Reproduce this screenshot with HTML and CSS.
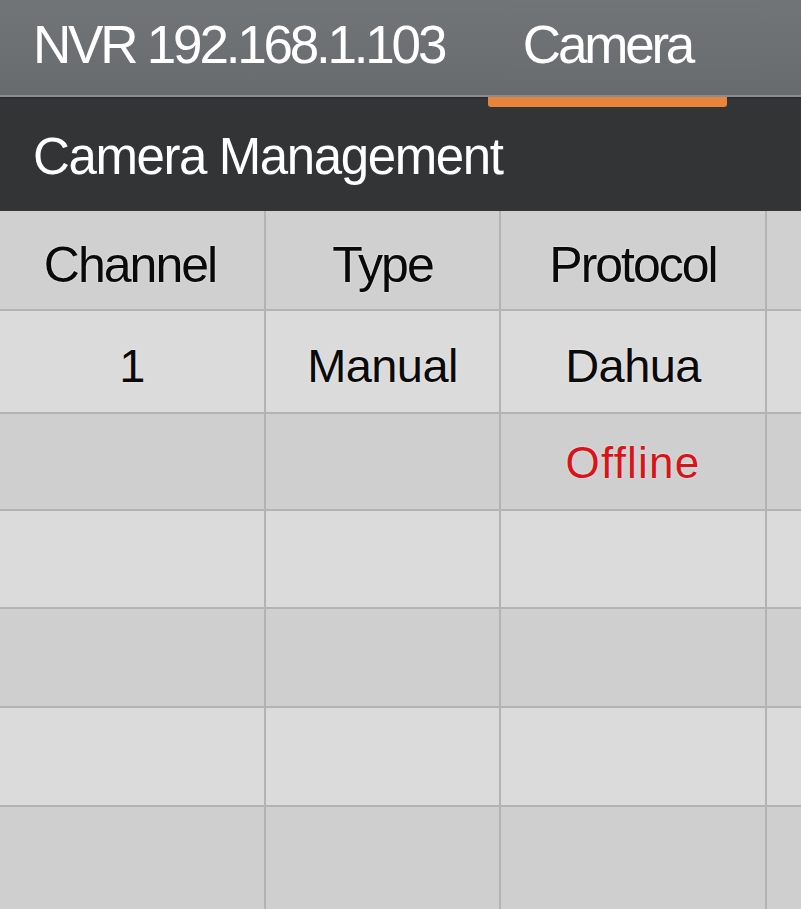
FILE: index.html
```html
<!DOCTYPE html>
<html lang="en">
<head>
    <meta charset="UTF-8">
    <meta name="viewport" content="width=device-width, initial-scale=1.0">
    <title>NVR 192.168.1.103 - Camera</title>
    <link rel="stylesheet" href="styles.css">
</head>
<body>

    <div class="top-bar">
        <div class="device-name">NVR 192.168.1.103</div>
        <div class="tab active">Camera</div>
    </div>

    <div class="section-bar">Camera Management</div>

    <div class="grid">
        <div class="cell head">Channel</div>
        <div class="cell head">Type</div>
        <div class="cell head">Protocol</div>
        <div class="cell head"></div>

        <div class="cell light data">1</div>
        <div class="cell light data">Manual</div>
        <div class="cell light data">Dahua</div>
        <div class="cell light"></div>

        <div class="cell dark"></div>
        <div class="cell dark"></div>
        <div class="cell dark status offline">Offline</div>
        <div class="cell dark"></div>

        <div class="cell light"></div>
        <div class="cell light"></div>
        <div class="cell light"></div>
        <div class="cell light"></div>

        <div class="cell dark"></div>
        <div class="cell dark"></div>
        <div class="cell dark"></div>
        <div class="cell dark"></div>

        <div class="cell light"></div>
        <div class="cell light"></div>
        <div class="cell light"></div>
        <div class="cell light"></div>

        <div class="cell dark"></div>
        <div class="cell dark"></div>
        <div class="cell dark"></div>
        <div class="cell dark"></div>
    </div>

</body>
</html>
```

FILE: styles.css
```css
/* General Reset */
* {
    margin: 0;
    padding: 0;
    box-sizing: border-box;
}

body {
    font-family: "Liberation Sans", Arial, sans-serif;
    background-color: #cfcfcf;
    width: 801px;
    height: 909px;
    overflow: hidden;
}

/* Top navigation */
.top-bar {
    height: 99px;
    display: flex;
    align-items: stretch;
    background: linear-gradient(#727578, #686b6e);
    border-bottom: 2px solid #2b2c2d;
    box-shadow: inset 0 -2px 0 #8a8d90;
    color: #fff;
    font-size: 53px;
    letter-spacing: -3.2px;
}

.device-name {
    padding: 14px 0 0 33px;
    width: 488px;
}

.tab {
    position: relative;
    width: 239px;
    padding-top: 14px;
    text-align: center;
}

.tab.active::after {
    content: "";
    position: absolute;
    left: 0;
    right: 0;
    bottom: -10px;
    height: 10px;
    background-color: #e8843c;
    border-radius: 0 0 3px 3px;
}

.section-bar {
    height: 112px;
    display: flex;
    align-items: center;
    padding: 2px 0 0 33px;
    background-color: #333435;
    color: #fff;
    font-size: 51px;
    letter-spacing: -1.4px;
}

/* Channel table */
.grid {
    display: grid;
    grid-template-columns: 264px 233px 264px 40px;
    grid-template-rows: 98px 101px 95px 96px 97px 97px 110px;
    gap: 2px;
    background-color: #b3b3b3;
}

.cell {
    display: flex;
    align-items: center;
    justify-content: center;
    color: #0a0a0a;
    text-shadow: 0 0 2px rgba(255, 255, 255, 0.8);
}

.cell.head {
    background-color: #d0d0d0;
    font-size: 50px;
    letter-spacing: -2px;
    padding: 10px 0 0 0;
}

.cell.head:first-child {
    padding-right: 4px;
}

.cell.light {
    background-color: #dbdbdb;
}

.cell.dark {
    background-color: #cfcfcf;
}

.data {
    font-size: 47px;
    letter-spacing: -0.6px;
    padding-top: 8px;
}

.status {
    font-size: 44px;
    letter-spacing: 1.2px;
    padding-top: 2px;
}

.offline {
    color: #d8141a;
}
```
